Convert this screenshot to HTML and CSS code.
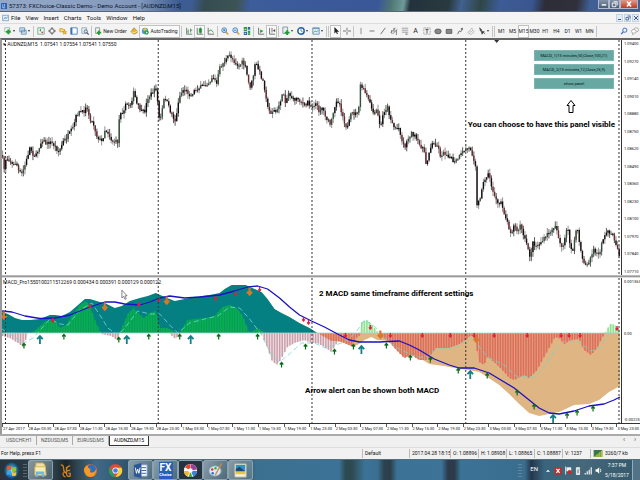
FILE: index.html
```html
<!DOCTYPE html>
<html lang="en">
<head>
<meta charset="utf-8">
<title>57373: FXChoice-Classic Demo - Demo Account - [AUDNZD,M15]</title>
<link rel="stylesheet" href="styles.css">
</head>
<body>
<header class="titlebar">
  <svg class="app-icon" viewBox="0 0 10 10"><rect width="10" height="10" rx="1" fill="#2a62b8"/><path d="M3 2v6h4M6 2v4" stroke="#fff" fill="none"/></svg>
  <h1 class="title">57373: FXChoice-Classic Demo - Demo Account - [AUDNZD,M15]</h1>
  <div class="winbtns">
    <button class="winbtn" aria-label="Minimize"><svg viewBox="0 0 10 8"><path d="M3 5h5" stroke="#fff" stroke-width="1.6"/></svg></button>
    <button class="winbtn" aria-label="Restore"><svg viewBox="0 0 10 8"><path d="M4 1.5h4v4M2.500 3h4v4h-4z" stroke="#fff" fill="none"/></svg></button>
    <button class="winbtn close" aria-label="Close"><svg viewBox="0 0 10 8"><path d="M3 1.500l4 5M7 1.500l-4 5" stroke="#fff" stroke-width="1.600"/></svg></button>
  </div>
</header>
<nav class="menubar">
  <svg class="menu-icon" viewBox="0 0 10 10"><rect x="1" y="1" width="8" height="8" fill="#e8f1fa" stroke="#6a93bd"/><path d="M2.500 7l2-3 1.500 2 2-3" stroke="#3a74b0" fill="none"/></svg>
  <button class="menu">File</button><button class="menu">View</button><button class="menu">Insert</button><button class="menu">Charts</button><button class="menu">Tools</button><button class="menu">Window</button><button class="menu">Help</button>
  <div class="mdi">
    <button aria-label="Minimize chart"><svg viewBox="0 0 6 6"><path d="M1 4.500h3" stroke="#3f5f8a"/></svg></button>
    <button aria-label="Restore chart"><svg viewBox="0 0 6 6"><path d="M2.500 1h2.500v2.500M1 2.500h2.500V5H1z" stroke="#3f5f8a" fill="none" stroke-width=".8"/></svg></button>
    <button aria-label="Close chart"><svg viewBox="0 0 6 6"><path d="M1 1l4 4M5 1L1 5" stroke="#3f5f8a"/></svg></button>
  </div>
</nav>
<div class="toolbar">
  <button class="tool drop" aria-label="New chart"><svg viewBox="0 0 10 10"><path d="M1 1h6v5H1z" fill="#fff" stroke="#8aa"/><path d="M5.500 3v6M2.500 6h6" stroke="#20a030" stroke-width="2.600"/></svg></button>
  <button class="tool drop" aria-label="Profiles"><svg viewBox="0 0 10 10"><path d="M1 1h6v5H1zM3 4h6v5H3z" fill="#d5e5f5" stroke="#5a86ad"/></svg></button>
  <i class="sep"></i>
  <button class="tool" aria-label="Market watch"><svg viewBox="0 0 10 10"><path d="M1 1h8v8H1z" fill="#eef5f0" stroke="#67a089"/><path d="M3 4l2-2v4z" fill="#1a9a3a"/><path d="M5 6h3l-1.500 2z" fill="#d22"/></svg></button>
  <button class="tool" aria-label="Data window"><svg viewBox="0 0 10 10"><circle cx="5" cy="5" r="3" fill="none" stroke="#555"/><path d="M5 0v3.500M5 6.500V10M0 5h3.500M6.500 5H10" stroke="#555"/></svg></button>
  <button class="tool" aria-label="Navigator"><svg viewBox="0 0 10 10"><path d="M1 2h3l1 1h2v3H1z" fill="#f6d873" stroke="#c99c28"/><path d="M7 4l1 1.700 1.700.3-1.300 1.200.4 1.800-1.800-.9-1.600.9.400-1.800L4.500 6l1.700-.3z" fill="#f3bf26" stroke="#a97812" stroke-width=".5"/></svg></button>
  <button class="tool" aria-label="Terminal"><svg viewBox="0 0 10 10"><path d="M1 1h8v8H1z" fill="#fff" stroke="#3b74ad"/><path d="M1 1h2v8H1z" fill="#3b74ad"/></svg></button>
  <button class="tool" aria-label="Strategy tester"><svg viewBox="0 0 10 10"><path d="M1 1h6v7H1z" fill="#e4ecf4" stroke="#8aa0b8"/><circle cx="6" cy="5.500" r="2" fill="#cfe3f5" stroke="#567"/><path d="M7.500 7L9.500 9.500" stroke="#456" stroke-width="1.300"/></svg></button>
  <i class="sep"></i>
  <button class="tool wide"><svg viewBox="0 0 10 10"><path d="M2 1h5v7H2z" fill="#f4f4f4" stroke="#888"/><path d="M6 4.500V10M3.500 7h5.500" stroke="#1ba030" stroke-width="2"/></svg>New Order</button>
  <button class="tool" aria-label="MetaEditor"><svg viewBox="0 0 10 10"><path d="M1 6l4-5 4 4v2L5 9z" fill="#e9b22f" stroke="#9a6a10" stroke-width=".7"/><path d="M2 6l3 1.500L9 5" stroke="#fff2b0" fill="none"/></svg></button>
  <button class="tool wide auto"><svg viewBox="0 0 10 10"><circle cx="5" cy="5" r="4" fill="#4e9ad2"/><path d="M2 3l3-2 3 2-3 2z" fill="#e8c23a"/><circle cx="7" cy="7" r="2.700" fill="#19a033"/><path d="M6.200 5.500v3L8.600 7z" fill="#fff"/></svg>AutoTrading</button>
  <i class="sep"></i>
  <button class="tool" aria-label="Bar chart"><svg viewBox="0 0 10 10"><path d="M2 1v8h7M4 3v5M3 6h1M7 2v5M7 4h2" stroke="#475" fill="none"/></svg></button>
  <button class="tool on" aria-label="Candlesticks"><svg viewBox="0 0 10 10"><path d="M1.500 1v8H9" stroke="#555" fill="none"/><path d="M4 2h3v5H4zM5.500 0v9" fill="#1ba030" stroke="#16802a" stroke-width=".6"/></svg></button>
  <button class="tool" aria-label="Line chart"><svg viewBox="0 0 10 10"><path d="M1.500 1v8H9" stroke="#555" fill="none"/><path d="M2 6q3-5 6 1" stroke="#1a9a3a" fill="none"/></svg></button>
  <i class="sep"></i>
  <button class="tool" aria-label="Zoom in"><svg viewBox="0 0 10 10"><path d="M6 6l3 3.500" stroke="#d3a536" stroke-width="2"/><circle cx="4" cy="4" r="3" fill="#d8ecfa" stroke="#2873b8"/><path d="M4 2.500v3M2.500 4h3" stroke="#2873b8"/></svg></button>
  <button class="tool" aria-label="Zoom out"><svg viewBox="0 0 10 10"><path d="M6 6l3 3.500" stroke="#d3a536" stroke-width="2"/><circle cx="4" cy="4" r="3" fill="#d8ecfa" stroke="#2873b8"/><path d="M2.500 4h3" stroke="#2873b8"/></svg></button>
  <button class="tool" aria-label="Tile windows"><svg viewBox="0 0 10 10"><path d="M1 0h4v5H1zM6 5h3v5H6z" fill="#2f9a45"/><path d="M6 0h3v4H6zM1 6h4v4H1z" fill="#2867a8"/><path d="M2 3h2M7 3h1M2 8h2M7 8h1" stroke="#fff"/></svg></button>
  <i class="sep"></i>
  <button class="tool" aria-label="Auto scroll"><svg viewBox="0 0 10 10"><path d="M2 1v8h7" stroke="#555" fill="none"/><path d="M4 3l4 2-4 2.500z" fill="#1ba030"/></svg></button>
  <button class="tool on" aria-label="Chart shift"><svg viewBox="0 0 10 10"><path d="M2 1v8h7M5 1v6" stroke="#555" fill="none"/><path d="M9 2.500v4L6 4.500z" fill="#555"/></svg></button>
  <i class="sep"></i>
  <button class="tool drop" aria-label="Indicators"><svg viewBox="0 0 10 10"><path d="M1 0h6v8H1z" fill="#e6eee8" stroke="#789"/><path d="M6.500 4v6M3.500 7h6" stroke="#1ba030" stroke-width="2.400"/></svg></button>
  <button class="tool drop" aria-label="Periods"><svg viewBox="0 0 10 10"><circle cx="5" cy="5" r="4" fill="#fff" stroke="#205faa" stroke-width="1.800"/><path d="M5 2.500V5l2 1" stroke="#345" fill="none" stroke-width=".8"/></svg></button>
  <button class="tool drop" aria-label="Templates"><svg viewBox="0 0 10 10"><path d="M1 1h8v8H1z" fill="#e8f1f8" stroke="#5587b0"/><path d="M1 2h8" stroke="#5587b0"/><path d="M2 7l2-2 2 1 2-2" stroke="#2a9a4a" fill="none"/></svg></button>
  <i class="sep double"></i>
  <button class="tool on" aria-label="Cursor"><svg viewBox="0 0 10 10"><path d="M3 0v8l2-1.800L6.200 9l1.200-.6L6.200 6H9z" fill="#222"/></svg></button>
  <button class="tool" aria-label="Crosshair"><svg viewBox="0 0 10 10"><path d="M5 1v3.500M5 6v3.500M0 5h4M6 5h4" stroke="#555"/></svg></button>
  <i class="sep"></i>
  <button class="tool" aria-label="Vertical line"><svg viewBox="0 0 10 10"><path d="M5 1v8" stroke="#777"/></svg></button>
  <button class="tool" aria-label="Horizontal line"><svg viewBox="0 0 10 10"><path d="M2 5h6" stroke="#555"/></svg></button>
  <button class="tool" aria-label="Trendline"><svg viewBox="0 0 10 10"><path d="M2 9l6-8" stroke="#555"/></svg></button>
  <button class="tool" aria-label="Channel"><svg viewBox="0 0 10 10"><path d="M1 7l6-6M3 9l6-6M2 4v4M5 1v5M8 4v6" stroke="#555" stroke-width=".9"/></svg></button>
  <button class="tool" aria-label="Fibonacci"><svg viewBox="0 0 10 10"><path d="M1 1.500h8M1 4h8M1 6.500h8M6 9h3M6.500 7v3" stroke="#777" stroke-width=".8"/></svg></button>
  <button class="tool letter" aria-label="Text">A</button>
  <button class="tool" aria-label="Text label"><svg viewBox="0 0 10 10"><path d="M1 1h8v8H1z" fill="none" stroke="#777" stroke-dasharray="1 1"/><path d="M3 3h4M5 3v5" stroke="#333"/></svg></button>
  <button class="tool" aria-label="Ellipse"><svg viewBox="0 0 10 10"><ellipse cx="5" cy="5.500" rx="4" ry="3" fill="#888" stroke="#555"/></svg></button>
  <button class="tool" aria-label="Rectangle"><svg viewBox="0 0 10 10"><path d="M1.500 3h7v5h-7z" fill="#888" stroke="#555"/></svg></button>
  <button class="tool" aria-label="Arrow line"><svg viewBox="0 0 10 10"><path d="M2 9l2-4 2 1 2-5M6 2h2v2" stroke="#555" fill="none"/></svg></button>
  <button class="tool" aria-label="Pitchfork"><svg viewBox="0 0 10 10"><path d="M1 7l6-6M2 9l6-6M5 9.500l5-5" stroke="#777" stroke-dasharray="2 1"/></svg></button>
  <button class="tool drop" aria-label="Arrows"><svg viewBox="0 0 10 10"><path d="M2 1l3 3-2 1zM4 5l4 1-3 3zM7 7l2 2" fill="#444" stroke="#444" stroke-width=".8"/></svg></button>
  <i class="sep double"></i>
  <button class="tool">M1</button><button class="tool">M5</button><button class="tool on">M15</button><button class="tool">M30</button><button class="tool">H1</button><button class="tool">H4</button><button class="tool">D1</button><button class="tool">W1</button><button class="tool">MN</button>
  <i class="sep"></i>
  <span class="spacer"></span>
  <button class="tool" aria-label="Search"><svg viewBox="0 0 10 10"><circle cx="6" cy="4" r="2.600" fill="#eef5ff" stroke="#3a68c0" stroke-width="1.200"/><path d="M4 6L1.500 9" stroke="#3a68c0" stroke-width="1.600"/></svg></button>
  <button class="tool" aria-label="Chat"><svg viewBox="0 0 10 10"><ellipse cx="6.500" cy="3.500" rx="3" ry="2.500" fill="#fff" stroke="#999"/><ellipse cx="3.500" cy="5.500" rx="3" ry="2.300" fill="#fff" stroke="#999"/><path d="M2 7.500V10l2-2" fill="#fff" stroke="#999" stroke-width=".8"/></svg></button>
</div>

<main class="chart">
  <section class="pane price">
    <svg class="plot" id="price" viewBox="2 40 620 235" preserveAspectRatio="none"></svg>
    <p class="caption">▾ AUDNZD,M15&nbsp; 1.07541 1.07554 1.07541 1.07550</p>
    <div class="panel">
      <button>MACD_1(15 minutes,50,Close,100,21)</button>
      <button>MACD_2(15 minutes,12,Close,26,9)</button>
      <button>show panel</button>
    </div>
    <svg class="up-arrow" viewBox="0 0 10 14"><path d="M5 1l4 5H7v7H3V6H1z" fill="#fff" stroke="#000"/></svg>
    <p class="note note-panel">You can choose to have this panel visible</p>
  </section>
  <div class="scale prices"><span>1.09400</span><span>1.09270</span><span>1.09140</span><span>1.09010</span><span>1.08880</span><span>1.08750</span><span>1.08620</span><span>1.08490</span><span>1.08360</span><span>1.08230</span><span>1.08100</span><span>1.07970</span><span>1.07840</span><span>1.07710</span></div>
  <div class="divider"></div>
  <section class="pane macd">
    <svg class="plot" id="macd" viewBox="2 278 620 145" preserveAspectRatio="none"></svg>
    <p class="caption">MACD_Pro1550100211512269 0.000434 0.000391 0.000129 0.000122</p>
    <p class="note note-settings">2 MACD same timeframe different settings</p>
    <p class="note note-alert">Arrow alert can be shown both MACD</p>
    <svg class="cursor" viewBox="0 0 8 12"><path d="M1 1v9l2-2 1.500 3.500 1.500-.7L4.500 7.500H7z" fill="#fff" stroke="#555" stroke-width=".8"/></svg>
  </section>
  <div class="scale levels"><span>0.001363</span><span class="zero">0.00</span><span>-0.00225</span></div>
  <div class="times" id="times"></div>
</main>

<nav class="tabs">
  <a href="#" class="tab">USDCHF,H1</a><a href="#" class="tab">NZDUSD,M5</a><a href="#" class="tab">EURUSD,M5</a><a href="#" class="tab active">AUDNZD,M15</a>
  <span class="tab-scroll">‹ &nbsp; &nbsp; ›</span>
</nav>
<div class="status">
  <span>For Help, press F1</span><span>Default</span><span>2017.04.28 18:15</span><span>O: 1.08896</span><span>H: 1.08908</span><span>L: 1.08865</span><span>C: 1.08887</span><span>V: 1237</span>
  <span><svg class="signal" viewBox="0 0 10 8"><path d="M0 0h10v8H0z" fill="#3f7f50"/><path d="M0 8L10 0v8z" fill="#b5c94a"/><path d="M2 0v8M4 0v8M6 0v8M8 0v8" stroke="#2d6048" stroke-width=".5"/></svg>3260/7 kb</span>
</div>
<footer class="taskbar">
  <button class="orb" aria-label="Start"><svg viewBox="0 0 18 20"><defs><radialGradient id="orb"><stop offset="0" stop-color="#9adcf5"/><stop offset=".6" stop-color="#2a7fb5"/><stop offset="1" stop-color="#153f60"/></radialGradient></defs><ellipse cx="9" cy="10" rx="8" ry="9" fill="url(#orb)"/><path d="M4 6q2.500-2 4.500-.5V10Q6.500 8.500 4 10z" fill="#e9592a"/><path d="M9.500 6q2 1.500 4.500 0v4.500q-2.500 1.500-4.500 0z" fill="#8cc63e"/><path d="M4 11q2.500-1.500 4.500 0v4Q6.500 13.500 4 15z" fill="#3aa4e6"/><path d="M9.500 11.500q2 1.500 4.500 0V15q-2.500 1.500-4.500.500z" fill="#fcc02a"/></svg></button>
  <i class="grip"></i>
  <button class="task open light" aria-label="Explorer"><svg viewBox="0 0 16 18"><path d="M3 1h8l2 3v8H3z" fill="#f3e19a" stroke="#c9ac50"/><path d="M2 5h11l1 9H2z" fill="#f9edb5" stroke="#d2b85f"/><path d="M3 10h9v6h-2v-3H5v3H3z" fill="#6fb8e0"/></svg></button>
  <button class="task dark" aria-label="Editor"><svg viewBox="0 0 16 18"><path d="M3 3q3 0 3 4t3 5V5M8 16q-4-2-2-5M9 8q1-4 4-4M13 9q-4-1-4 3t4 3v-3h-2" fill="none" stroke="#d0801c" stroke-width="1.400"/></svg></button>
  <button class="task" aria-label="Firefox"><svg viewBox="0 0 16 18"><circle cx="8" cy="9" r="7" fill="#e8681a"/><circle cx="9" cy="7.500" r="4.800" fill="#2c6fc0"/><path d="M1 8q2-5 4-4 0 3 3 3-1 3 0 4 4 1 6-3 0 7-6 8-6-1-7-8" fill="#f59a22"/></svg></button>
  <button class="task" aria-label="Chrome"><svg viewBox="0 0 16 18"><circle cx="8" cy="9" r="7" fill="#dd4b39"/><path d="M1.800 5.800L8 16A7 7 0 0 1 1.800 5.800z" fill="#1ea55a"/><path d="M8 16l3.500-6L9 6h5.500A7 7 0 0 1 8 16z" fill="#fcd02f"/><circle cx="8" cy="9" r="3.300" fill="#fff"/><circle cx="8" cy="9" r="2.500" fill="#3f80e8"/></svg></button>
  <button class="task open light" aria-label="Word"><svg viewBox="0 0 16 18"><path d="M7 3h8v12H7z" fill="#fff" stroke="#8aa5cf"/><path d="M9 6h5M9 9h5M9 12h5" stroke="#2b579a"/><path d="M1 3l8-2v16l-8-2z" fill="#2b579a"/><path d="M2.500 6l1.200 6L5 7.500 6.300 12l1.200-6" fill="none" stroke="#fff"/></svg></button>
  <button class="task open light" aria-label="FX Choice"><span class="fx"><b>FX</b><small>Choice</small></span></button>
  <button class="task open dark" aria-label="Picasa"><svg viewBox="0 0 16 18"><circle cx="8" cy="9" r="7" fill="#fff"/><path d="M8 9V2a7 7 0 0 1 7 6z" fill="#9b3f9b"/><path d="M8 9L2 5.500A7 7 0 0 1 7.500 2z" fill="#e6452e"/><path d="M1 9.500h7L5 15.500A7 7 0 0 1 1 9.500z" fill="#f4b92b"/><path d="M8 9l7 .500a7 7 0 0 1-4 6z" fill="#3a7fd8"/><path d="M8 10l2 6H6z" fill="#3ea849"/><circle cx="8" cy="9" r="2.400" fill="#fff"/></svg></button>
  <button class="task open light" aria-label="Paint"><svg viewBox="0 0 16 18"><ellipse cx="7.500" cy="9.500" rx="6.500" ry="5.500" fill="#dbe9f4" stroke="#7fa0bd"/><circle cx="4.500" cy="8" r="1.300" fill="#d33"/><circle cx="8" cy="6.500" r="1.300" fill="#3a3"/><circle cx="5" cy="12" r="1.300" fill="#36c"/><path d="M14 1L8 12l-1 3 2-2 6-11z" fill="#cc8a3c"/></svg></button>
  <button class="task open light" aria-label="Photo viewer"><svg viewBox="0 0 16 18"><path d="M2 2h12v14H2z" fill="#f3f3e8" stroke="#b9b9a0"/><path d="M3 3h10v7H3z" fill="#2f8fd0"/><path d="M3 7l4-2 6 5H3z" fill="#1b4d6b"/><path d="M3 10h10v3H3z" fill="#e8c445"/></svg></button>
  <div class="tray">
    <i class="grip"></i>
    <span class="lang">EN</span>
    <svg viewBox="0 0 10 10"><path d="M2.500 6.500L5 4l2.500 2.500z" fill="#fff"/></svg>
    <svg viewBox="0 0 10 10"><path d="M1 1h8v9H1z" fill="#d2231f"/><path d="M3 3l4 5M7 3L3 8" stroke="#fff" stroke-width="1.500"/></svg>
    <svg viewBox="0 0 10 10"><path d="M2 0v10" stroke="#fff"/><path d="M3 1h6v5H3z" fill="#eee"/><circle cx="7" cy="7" r="2.500" fill="#d22"/></svg>
    <svg viewBox="0 0 10 10"><path d="M3 1.500h4V10H3z" fill="#ddd" stroke="#fff"/><path d="M5 4v4M7 3l2 2" stroke="#456"/></svg>
    <svg viewBox="0 0 10 10"><path d="M1.500 10V8M4 10V6M6.500 10V4M9 10V1" stroke="#fff" stroke-width="1.400"/></svg>
    <svg viewBox="0 0 10 10"><path d="M2 3.500h2L6.500 1v8L4 6.500H2z" fill="#fff"/><path d="M8 3q1 2 0 4" stroke="#fff" fill="none"/></svg>
    <div class="clock"><span>7:37 PM</span><span>5/18/2017</span></div>
    <i class="show-desktop"></i>
  </div>
</footer>
<script src="chart.js"></script>
</body>
</html>
```
FILE: styles.css
```css
* { box-sizing: border-box; }
body {
  margin: 0;
  min-height: 100vh;
  display: flex;
  flex-direction: column;
  overflow-x: hidden;
  background: #f0f0f0;
  color: #111;
  font-family: Roboto, "Liberation Sans", sans-serif;
  font-size: 6px;
  line-height: 8px;
}
button { font: inherit; color: inherit; border: 0; background: none; padding: 0; margin: 0; white-space: nowrap; }
a { color: inherit; text-decoration: none; }
p, h1 { margin: 0; }
svg { display: block; flex: none; }

.titlebar {
  height: 12px;
  display: flex;
  align-items: center;
  gap: 2px;
  padding-left: 1px;
  border-bottom: 1px solid #5d6670;
  background:
    linear-gradient(90deg, #93a7c6 0%, #8ea3c5 10%, #7f96ba 22%, transparent 28%),
    linear-gradient(100deg, #3d5c92 30%, #344c50 32%, #3d5457 37%, #3c5c9a 39%, #3a5797 59%, #4e7674 61%, #6e9a98 63%, #23323d 64%, #283a3e 70%, #41618f 72%, #2f4647 75%, #3c5c97 78%, #39568f 83%, #2d2d38 85%, #30303a 90%, #3f5f95 92%);
}
.app-icon { width: 6px; height: 10px; }
.title { font-size: 6px; font-weight: normal; color: #0b1526; }
.winbtns { margin-left: auto; align-self: flex-start; display: flex; padding-right: 2px; }
.winbtn { width: 11px; height: 9px; border: 1px solid #aeb9c9; border-top: 0; background: linear-gradient(#8694aa, #4b5b75); }
.winbtn.close { width: 18px; background: linear-gradient(#e09a8a, #c03a22); }
.winbtn svg { width: 100%; height: 8px; }

.menubar { height: 11px; display: flex; align-items: center; gap: 5px; padding-left: 2px; background: #f4f4f4; }
.menu-icon { width: 7px; height: 8px; margin-right: -3px; }
.mdi { margin-left: auto; display: flex; gap: 1px; padding-right: 1px; }
.mdi button { width: 7px; height: 8px; display: grid; place-items: center; background: #e3ecf6; border: 1px solid #c4d3e4; }
.mdi svg { width: 6px; height: 6px; }

.toolbar { height: 15px; display: flex; align-items: center; padding-left: 2px; border-top: 1px solid #dcdcdc; background: #f3f3f3; font-size: 5px; color: #222; }
.tool { flex: none; width: 11px; height: 13px; display: flex; align-items: center; justify-content: center; }
.tool svg { width: 8px; height: 10px; }
.tool.drop { width: 15px; gap: 1px; }
.tool.drop::after { content: ""; border: 1px solid transparent; border-top: 2px solid #333; border-bottom: 0; }
.tool.wide { width: 35px; gap: 1px; }
.tool.auto { width: 41px; }
.tool.letter { font-size: 7px; }
.tool.on, .tool.auto { border: 1px solid #c2c2c2; background: #fafafa; }
.sep { flex: none; width: 1px; height: 11px; margin: 0 1px; background: #c4c4c4; }
.sep.double { width: 3px; border: solid #c4c4c4; border-width: 0 1px; background: none; }
.spacer { flex: 1; }

.chart {
  flex: 1;
  display: grid;
  grid-template-columns: minmax(0, 1fr) 18px;
  grid-template-rows: minmax(0, 235fr) 3px minmax(0, 145fr) 11px;
  border-top: 2px solid #666;
  border-left: 2px solid #999;
  background: #fff;
  overflow: hidden;
}
.pane { position: relative; min-height: 0; border-right: 1px solid #333; }
.plot { position: absolute; inset: 0; width: 100%; height: 100%; }
.caption { position: absolute; left: 1px; top: 0; font-size: 5px; line-height: 8px; }
.divider { grid-column: 1 / -1; background: #999; border-bottom: 1px solid #ddd; border-top: 1px solid #bbb; }
.scale { display: flex; flex-direction: column; justify-content: space-between; font-size: 4px; line-height: 6px; padding: 1px 0 0 2px; white-space: nowrap; }
.zero { margin-bottom: 34px; }
.times { grid-column: 1 / -1; display: grid; grid-template-columns: repeat(25, minmax(0, 1fr)); margin-right: -2px; border-top: 1px solid #333; font-size: 4px; line-height: 10px; white-space: nowrap; }
.times span { background: linear-gradient(#555, #555) no-repeat 0 0 / 1px 3px; padding-left: 1px; }
.panel { position: absolute; right: 7px; top: 10px; width: 80px; display: grid; gap: 3px; }
.panel button { height: 11px; font-size: 4px; background: #68a8a3; border: 1px solid #7eb5b1; color: #021210; }
.up-arrow { position: absolute; right: 45px; top: 59px; width: 10px; height: 15px; }
.note { position: absolute; font-weight: bold; font-size: 8px; line-height: 10px; white-space: nowrap; color: #000; }
.note-panel { right: 6px; top: 80px; }
.note-settings { left: 317px; top: 11px; }
.note-alert { left: 303px; top: 108px; }
.cursor { position: absolute; left: 119px; top: 11px; width: 7px; height: 11px; }

.tabs { height: 13px; display: flex; align-items: flex-start; padding-left: 2px; border-top: 2px solid #aaa; background: #f0f0f0; font-size: 5px; color: #555; }
.tab { padding: 0 4px; border-right: 1px solid #aaa; line-height: 9px; }
.tab.active { background: #fff; color: #000; border: 1px solid #333; border-top: 0; }
.tab-scroll { margin-left: auto; padding-right: 4px; font-size: 7px; line-height: 9px; }

.status { height: 12px; display: grid; grid-template-columns: 1fr 47px 41px repeat(5, 28px) 50px; align-items: center; border-top: 1px solid #ddd; font-size: 5px; white-space: nowrap; background: #f1f1f1; }
.status span { padding-left: 2px; border-left: 1px solid #bbb; display: flex; align-items: center; gap: 2px; line-height: 9px; }
.status span:first-child { border-left: 0; padding-left: 1px; }
.signal { width: 10px; height: 7px; }

.taskbar {
  height: 21px;
  display: flex;
  align-items: stretch;
  border-top: 1px solid #54707f;
  background:
    linear-gradient(90deg, #26343c 0%, #2c3b44 6%, #2f4550 12%, #3f6a88 15%, #2a4a60 22%, #2f4856 38%, #3c708f 40%, #3b7296 53%, #2c4a50 54%, #2f4a50 55%, #3b7296 57%, #3b6f91 59%, #2b4350 60%, #2c3f49 61%, #3b7296 62%, #3c7397 69%, #2c3a49 70%, #2c3a49 71%, #3b7296 72%, #3a6d8e 82%, #25364a 83%, #38647d 85%, #45687a 91%, #34586c 100%);
}
.orb { width: 22px; display: grid; place-items: center; }
.orb svg { width: 17px; height: 19px; }
.grip { width: 4px; margin: 3px 1px; background: radial-gradient(circle, #9ab 30%, transparent 40%) 0 0 / 2px 3px; opacity: .4; }
.task { width: 25px; display: grid; place-items: center; border: 1px solid transparent; border-radius: 2px; }
.task.dark:not(.open) { background: linear-gradient(90deg, transparent, #171d22cc 50%, transparent); }
.task svg { width: 15px; height: 17px; }
.task.open { border-color: #8aa3b0; }
.task.light { background: linear-gradient(120deg, #c6d3da99, #7e9aa866); }
.task.dark { background: #20262b99; }
.fx { width: 14px; height: 17px; display: grid; align-content: center; justify-items: center; color: #fff; background: #2a5fb8; line-height: 9px; }
.fx b { font-size: 10px; }
.fx small { font-size: 4px; line-height: 5px; font-weight: bold; }
.tray { margin-left: auto; display: flex; align-items: center; gap: 2px; color: #fff; font-size: 5px; }
.tray .grip { align-self: stretch; }
.tray svg { width: 8px; height: 9px; }
.lang { padding: 0 4px 2px 5px; font-size: 6px; }
.clock { display: grid; justify-items: center; line-height: 10px; width: 26px; }
.show-desktop { align-self: stretch; width: 8px; border-left: 1px solid #93abba; background: #7f9cae66; }
```
FILE: chart.js
```js
const NS = "http://www.w3.org/2000/svg";

function add(parent, tag, attrs) {
  const el = document.createElementNS(NS, tag);
  for (const key in attrs) el.setAttribute(key, attrs[key]);
  parent.appendChild(el);
  return el;
}

function parse(text) {
  return text.trim().split(/\s+/).map(p => p.split(",").map(Number));
}

function at(points, x) {
  for (let i = 1; i < points.length; i++) {
    const [x0, y0] = points[i - 1], [x1, y1] = points[i];
    if (x <= x1) return y0 + (y1 - y0) * (x - x0) / (x1 - x0);
  }
  return points[points.length - 1][1];
}

let seed = 7;
function random() {
  seed = (seed * 16807) % 2147483647;
  return seed / 2147483647;
}

const price = document.getElementById("price");
const macd = document.getElementById("macd");

function dayLines(svg, top, bottom) {
  for (const x of [5.5, 158.5, 312.5, 466.5, 620])
    add(svg, "path", { d: `M${x} ${top}V${bottom}`, stroke: "#333", "stroke-width": 1, "stroke-dasharray": "2 2" });
}

/* Candles */
const closes = parse(`2,155 4,170 6,158 10,160 13,166 16,162 19,172 22,174 26,162 30,147 33,154 36,156 40,145 43,139 46,144
50,142 54,145 59,152 63,142 68,136 73,128 77,114 80,112 84,112 86,105 90,118 94,125 97,136 102,142 105,130 108,132 112,141
118,142 120,110 122,113 126,105 131,104 134,92 137,104 142,112 145,111 148,98 153,92 157,88 158,105 160,123 165,96 170,110
176,122 179,98 183,90 187,91 191,96 195,90 201,87 206,84 210,82 213,76 217,84 220,68 226,60 230,55 235,62 239,66 243,62
246,68 250,88 253,80 256,62 259,70 263,80 266,92 268,108 271,113 274,110 277,113 281,100 284,93 286,102 289,93 294,100
298,98 302,102 306,107 308,101 312,107 316,103 320,112 322,106 327,118 331,125 335,110 337,100 340,103 343,115 346,125
348,128 352,113 356,114 360,108 361,85 363,88 367,95 371,105 375,116 377,110 380,122 381,130 384,112 388,107 391,118
395,128 400,128 403,143 406,146 409,138 412,133 416,137 420,145 424,148 427,166 430,150 433,144 438,145 441,155 445,153
450,156 455,163 460,157 466,149 471,148 474,157 477,168 477.5,207 481,197 483,185 486,180 489,172 492,186 496,197 499,206
502,201 505,213 509,225 512,233 515,225 519,233 521,224 525,238 529,249 531,257 534,242 537,246 541,243 546,238 549,233
553,231 556,224 559,235 562,247 564,248 567,232 569,230 571,245 574,252 577,230 579,230 581,250 585,263 589,265 592,256
595,250 600,256 603,240 606,236 609,230 613,235 616,240 619,252 621,257`);

dayLines(price, 40, 275);
let open = 155;
for (let x = 2.6; x < 621; x += 1.6) {
  const close = at(closes, x) + (random() - 0.5) * 4;
  const top = Math.min(open, close), bottom = Math.max(open, close);
  const falling = close > open;
  add(price, "path", {
    d: `M${x} ${top - random() * 5}V${bottom + random() * 5}`,
    stroke: random() > 0.5 ? "#111" : "#666", "stroke-width": 0.7
  });
  add(price, "rect", {
    x: x - 0.7, y: top, width: 1.4, height: Math.max(1.2, bottom - top),
    fill: falling ? (random() > 0.5 ? "#6d2a30" : "#1b0c0e") : (random() > 0.5 ? "#34513d" : "#0c0f0d")
  });
  open = close;
}
add(price, "path", { d: "M495 40h5l-2.500 3z", fill: "#333" });

/* Indicator */
const ZERO = 333;
function area(text, fill) {
  const pts = parse(text);
  add(macd, "path", { d: `M${pts[0][0]} ${ZERO}L${pts.join(" ")}L${pts[pts.length - 1][0]} ${ZERO}Z`, fill });
}
function bars(text, fill, gap) {
  const pts = parse(text);
  if (gap) area(text, gap);
  let d = "";
  for (let x = Math.ceil(pts[0][0] / 2.57) * 2.57; x < pts[pts.length - 1][0]; x += 2.57)
    d += `M${x.toFixed(2)} ${ZERO}V${at(pts, x).toFixed(1)}`;
  add(macd, "path", { d, stroke: fill, "stroke-width": 1.5 });
}

area(`2,312 8,314 15,318 22,320 30,320 40,319 50,315 55,315 62,316 70,312 77,306 85,299 90,299 100,302 105,303 115,308
122,306 130,301 140,298 148,296 156,293 165,297 175,301 185,299 195,297 210,295 220,293 225,289 232,285 246,285 255,289
262,292 268,299 275,309 282,313 290,317 300,323 310,328 318,333`, "#048083");
area(`318,333 325,337 332,341 338,341 345,343 352,346 358,345 365,340 372,337 378,340 390,341 400,346 410,353 420,358
430,364 445,366 460,369 470,370 480,372 488,377 500,385 510,394 520,404 530,413 540,416 550,414 560,412 575,405 590,404
600,400 610,392 621,386`, "#deb583");

const GREEN = "#06b04e", GREEN_GAP = "#0a9a60";
bars("32,333 38,328 46,321 55,320 60,328 66,325 73,315 80,305 86,301 90,306 95,320 101,333", GREEN, GREEN_GAP);
bars("120,333 128,314 134,308 138,313 144,318 150,313 156,311 160,328 168,328 176,333", GREEN, GREEN_GAP);
bars("180,333 188,320 205,318 215,316 223,307 230,305 237,308 243,316 250,333 258,328 265,333", GREEN, GREEN_GAP);
bars("360,333 362,322 368,320 372,324 379,333", "#8fe08f", "#dcf7dc");
bars("606,333 611,324 616,325 621,330", "#8fe08f", "#dcf7dc");

const PINK = "#c9a0aa", PINK_GAP = "#f3e2e6";
bars("2,336 10,338 18,343 23,347 28,334", PINK, PINK_GAP);
bars("101,334 112,336 118,341 120,334", PINK, PINK_GAP);
bars("170,334 176,339 180,334", PINK, PINK_GAP);
bars("262,334 268,348 272,360 277,365 281,360 288,347 295,343 305,340 312,343 318,343 325,347 332,352 336,345 340,341", PINK, PINK_GAP);
const RED = "#d9705a", RED_GAP = "#e79a7c";
bars("320,334 325,337 332,341 340,341 352,346 357,338 362,334", RED, RED_GAP);
bars("378,334 390,342 397,350 405,358 412,355 420,360 427,360 433,353 437,348 450,348 460,344 466,340 472,335 476,340 480,362 485,365 488,357 495,362 500,367 505,372 510,378 515,380 525,375 530,378 538,370 545,357 550,348 556,337 560,338 565,344 572,340 580,339 585,350 592,355 598,348 603,338 606,333", RED, RED_GAP);
add(macd, "path", { d: "M2 333H621", stroke: "#a9d5d0", "stroke-width": 0.8 });

add(macd, "path", {
  d: "M" + parse(`2,329 8,333 24,343 33,338 42,328 50,319 60,324 68,325 80,310 92,303 100,315 108,328 118,335 125,328
138,311 150,314 160,314 170,325 178,333 190,323 205,319 218,316 230,307 240,308 250,319 262,335 272,355 280,362 290,354
302,343 315,343 326,348 336,345 345,342 356,333 365,320 376,327 385,338 398,348 412,355 425,358 437,349 455,348 468,341
474,336 482,350 490,358 505,365 518,377 535,377 546,366 556,350 566,341 580,342 592,351 602,347 612,330`).join("L"),
  fill: "none", stroke: "#6fd8d0", "stroke-width": 0.8, "stroke-dasharray": "5 3"
});

add(macd, "path", {
  d: "M" + parse(`2,311 12,312 25,316 40,318.5 55,318 70,315 90,307 105,302 115,302 125,304 140,305 150,302 160,298 170,296
185,298 200,297 220,295 235,291 248,287 258,286 268,289 280,298 290,307 300,315 312,321 325,327 340,335 350,340 360,342
380,342 400,341 410,345 420,350 435,359 450,365 460,368 475,368 490,373 500,379 515,388 530,400 540,408 550,413 560,414
575,411 590,406 605,404 615,400 621,397`).join("L"),
  fill: "none", stroke: "#1a12c4", "stroke-width": 1.3, "stroke-linejoin": "round"
});

/* Signal arrows: the point is the centre of each arrow */
function arrows(text, color, r, dir, w) {
  for (const [x, y] of parse(text))
    add(macd, "path", {
      d: `M${x} ${y - dir * r}V${y + dir * r}M${x - r * 0.7} ${y + dir * r * 0.2}L${x} ${y + dir * r}L${x + r * 0.7} ${y + dir * r * 0.2}`,
      fill: "none", stroke: color, "stroke-width": w
    });
}
arrows("24,346 64,337 119,340 149,337 180,337 219,337 258,337 282,365 306,347 335,352 354,347 387,346 411,358 431,360 459,371 488,376 518,393 535,407 568,416 578,413 594,409", "#0b6b14", 2.5, -1, 1.2);
arrows("40,340 127,340 191,340 362,350 471,375 554,419", "#118088", 4, -1, 1.8);
arrows("53,320 90,306 139,304 159,299 216,298 236,293 260,289 304,319 309,322 346,335 371,327 391,335 423,335 451,335 475,335 495,335 528,335 562,335 570,335 581,335 618,328", "#dd1f3c", 2, 1, 1.4);
arrows("4,315 105,306 167,300 250,291 381,334 477,338", "#d9772a", 3.5, 1, 2.2);
dayLines(macd, 278, 423);

/* Time axis */
const labels = ["27 Apr 2017"];
for (const day of ["28 Apr", "1 May", "2 May", "3 May"])
  for (const hour of ["03", "07", "11", "15", "19", "23"]) labels.push(`${day} ${hour}:30`);
const times = document.getElementById("times");
for (const label of labels) {
  const span = document.createElement("span");
  span.textContent = label;
  times.appendChild(span);
}
```
